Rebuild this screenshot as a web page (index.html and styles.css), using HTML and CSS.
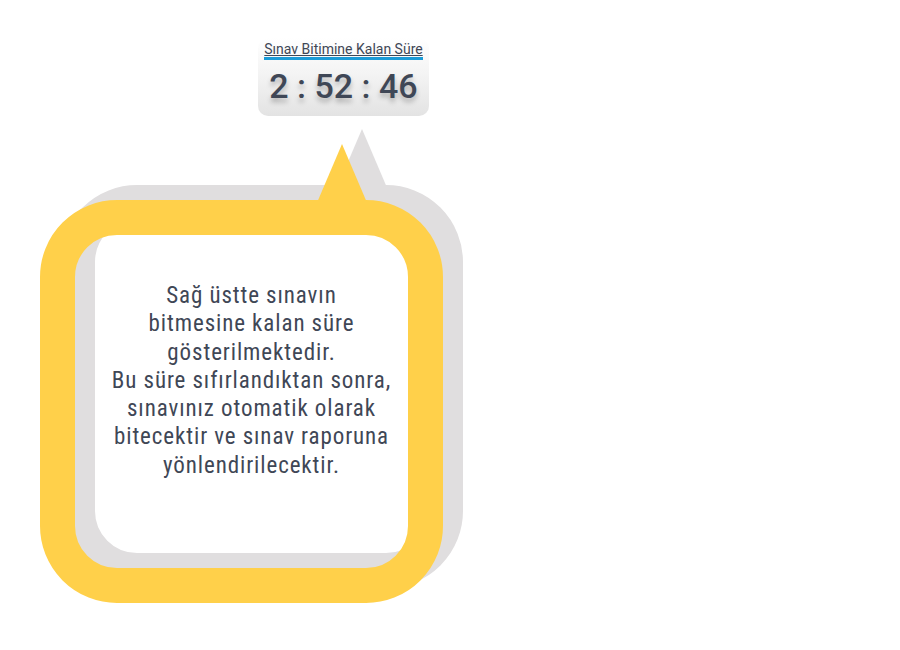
FILE: index.html
```html
<!DOCTYPE html>
<html lang="tr">
<head>
<meta charset="utf-8">
<link rel="stylesheet" href="styles.css">
</head>
<body>
<div class="page">
  <div class="timer">
    <span class="timer-label">Sınav Bitimine Kalan Süre</span>
    <div class="timer-value">2 : 52 : 46</div>
  </div>
  <div class="bubble">
    <svg class="bubble-art" width="403" height="403" viewBox="0 0 403 403" aria-hidden="true">
      <rect x="37.5" y="2.5" width="368" height="368" rx="59.5" ry="59.5" fill="none" stroke="#e0dedf" stroke-width="35"/>
      <polygon points="296,-10 322,-71 348,-10" fill="#e0dedf"/>
      <polygon points="276,5 302,-56 328,5" fill="#ffd04a"/>
      <rect x="17.5" y="17.5" width="368" height="368" rx="59.5" ry="59.5" fill="none" stroke="#ffd04a" stroke-width="35"/>
    </svg>
    <p class="bubble-text">Sağ üstte sınavın<br>bitmesine kalan süre<br>gösterilmektedir.<br>Bu süre sıfırlandıktan sonra,<br>sınavınız otomatik olarak<br>bitecektir ve sınav raporuna<br>yönlendirilecektir.</p>
  </div>
</div>
</body>
</html>
```

FILE: styles.css
```css
html, body {
  margin: 0;
  padding: 0;
  background: #ffffff;
}

.page {
  width: 900px;
  height: 650px;
  overflow: hidden;
  display: flex;
  flex-direction: column;
  align-items: flex-start;
}

.timer {
  margin-top: 38px;
  margin-left: 258px;
  width: 171px;
  height: 78px;
  box-sizing: border-box;
  border-radius: 10px;
  background: linear-gradient(to bottom, #ffffff 0%, #f4f4f4 45%, #e3e3e3 100%);
  display: flex;
  flex-direction: column;
  align-items: center;
  padding-top: 3px;
}

.timer-label {
  font-family: Roboto, "Liberation Sans", sans-serif;
  font-size: 14px;
  line-height: 16px;
  color: #3f4756;
  text-decoration: underline;
  text-underline-offset: 1px;
  border-bottom: 3px solid #1b9bd7;
}

.timer-value {
  font-family: Roboto, "Liberation Sans", sans-serif;
  font-weight: 500;
  font-size: 34px;
  line-height: 40px;
  margin-top: 6px;
  color: #3f4756;
  text-shadow: 0 4px 5px rgba(0, 0, 0, 0.25);
}

.bubble {
  position: relative;
  margin-top: 84px;
  margin-left: 40px;
  width: 403px;
  height: 403px;
  box-sizing: border-box;
  padding: 82px 35px 0 55px;
}

.bubble-art {
  position: absolute;
  left: 0;
  top: 0;
  overflow: visible;
}

.bubble-text {
  position: relative;
  margin: 0;
  text-align: center;
  font-family: "Roboto Condensed", Roboto, "Liberation Sans", sans-serif;
  font-stretch: condensed;
  font-size: 23px;
  letter-spacing: 0.9px;
  line-height: 28.3px;
  color: #3f4756;
}
```
